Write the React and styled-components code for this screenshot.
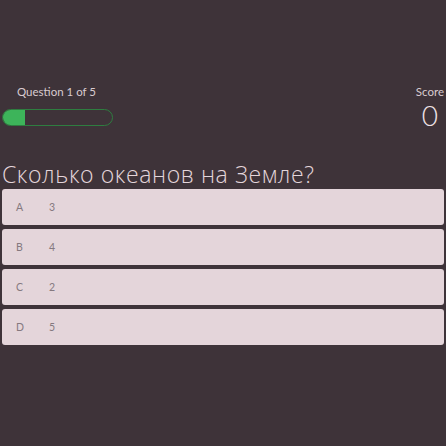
import React from 'react';
import styled, { createGlobalStyle } from 'styled-components';

const GlobalStyle = createGlobalStyle`
  html, body {
    margin: 0;
    padding: 0;
    background: #3e3339;
  }
  body {
    font-family: 'Lato', 'Noto Sans', sans-serif;
  }
`;

const Page = styled.div`
  width: 446px;
  height: 446px;
  box-sizing: border-box;
  padding: 84px 2px 0 2px;
  background: #3e3339;
  color: #e4d6db;
`;

const Header = styled.div`
  display: flex;
  justify-content: space-between;
  align-items: flex-start;
  height: 76px;
`;

const Progress = styled.div`
  display: flex;
  flex-direction: column;
`;

const Label = styled.div`
  font-size: 11.5px;
  font-weight: 400;
  color: #d9cbd0;
  padding-left: ${(p) => p.$indent || 0}px;
  line-height: 16px;
`;

const Bar = styled.div`
  margin-top: 9px;
  width: 111px;
  height: 17px;
  box-sizing: border-box;
  border: 1px solid #2e7d40;
  border-radius: 9px;
  overflow: hidden;
`;

const Fill = styled.div`
  height: 100%;
  background: #3db45a;
`;

const ScoreBox = styled.div`
  display: flex;
  flex-direction: column;
  align-items: flex-end;
`;

const ScoreValue = styled.div`
  font-size: 28px;
  font-weight: 300;
  line-height: 30px;
  margin-right: 6px;
  color: #eee3e7;
`;

const Question = styled.h2`
  margin: 0;
  font-family: 'Open Sans', 'Lato', sans-serif;
  font-size: 23px;
  font-weight: 300;
  letter-spacing: 0.6px;
  line-height: 29px;
  color: #e4d6db;
`;

const Answers = styled.div`
  display: flex;
  flex-direction: column;
  gap: 4px;
`;

const Answer = styled.div`
  display: flex;
  align-items: center;
  height: 36px;
  box-sizing: border-box;
  padding-left: 14px;
  background: #e4d5da;
  border-radius: 3px;
  font-size: 10.5px;
  color: #85797f;
`;

const Letter = styled.span`
  width: 33px;
`;

const answers = [
  ['A', '3'],
  ['B', '4'],
  ['C', '2'],
  ['D', '5'],
];

export default function App() {
  const current = 1;
  const total = 5;
  return (
    <>
      <GlobalStyle />
      <Page>
        <Header>
          <Progress>
            <Label $indent={15}>Question {current} of {total}</Label>
            <Bar>
              <Fill style={{ width: `${(current / total) * 100}%` }} />
            </Bar>
          </Progress>
          <ScoreBox>
            <Label>Score</Label>
            <ScoreValue>0</ScoreValue>
          </ScoreBox>
        </Header>
        <Question>Сколько океанов на Земле?</Question>
        <Answers>
          {answers.map(([l, v]) => (
            <Answer key={l}>
              <Letter>{l}</Letter>
              <span>{v}</span>
            </Answer>
          ))}
        </Answers>
      </Page>
    </>
  );
}
